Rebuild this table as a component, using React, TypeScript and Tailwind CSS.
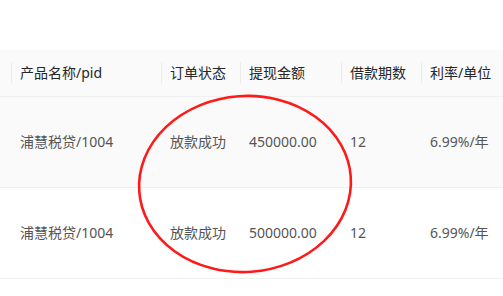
import React from "react";

const columns = [
  { key: "name", title: "产品名称/pid", width: "w-[150px]" },
  { key: "status", title: "订单状态", width: "w-[79px]" },
  { key: "amount", title: "提现金额", width: "w-[101px]" },
  { key: "term", title: "借款期数", width: "w-[80px]" },
  { key: "rate", title: "利率/单位", width: "w-[120px]" },
];

const rows = [
  { name: "浦慧税贷/1004", status: "放款成功", amount: "450000.00", term: "12", rate: "6.99%/年" },
  { name: "浦慧税贷/1004", status: "放款成功", amount: "500000.00", term: "12", rate: "6.99%/年" },
];

export default function App() {
  return (
    <div
      className="relative w-[503px] h-[296px] overflow-hidden bg-white pt-[50px]"
      style={{ fontFamily: '"Noto Sans", "Noto Sans CJK SC", sans-serif' }}
    >
      <table className="table-fixed border-collapse w-[542px] text-[14px]">
        <thead>
          <tr className="h-[46px] bg-[#fafafa] border-b border-[#f0f0f0]">
            {/* cropped column on the left */}
            <th className="relative w-[12px] p-0">
              <span className="absolute right-0 top-1/2 -translate-y-1/2 w-px h-[21px] bg-[#ececec]" />
            </th>
            {columns.map((c, i) => (
              <th
                key={c.key}
                className={`relative ${c.width} px-2 text-left font-normal text-[#262626]`}
              >
                {c.title}
                {i < columns.length - 1 && (
                  <span className="absolute right-0 top-1/2 -translate-y-1/2 w-px h-[21px] bg-[#ececec]" />
                )}
              </th>
            ))}
          </tr>
        </thead>
        <tbody>
          {rows.map((r, i) => (
            <tr
              key={i}
              className={`h-[91px] border-b border-[#f0f0f0] text-[#555] ${i === 0 ? "bg-[#fafafa]" : "bg-white"}`}
            >
              <td className="p-0" />
              <td className="px-2">{r.name}</td>
              <td className="px-2">{r.status}</td>
              <td className="px-2">{r.amount}</td>
              <td className="px-2">{r.term}</td>
              <td className="px-2">{r.rate}</td>
            </tr>
          ))}
        </tbody>
      </table>

      {/* red hand-drawn circle */}
      <svg className="absolute left-0 top-0 pointer-events-none" width="503" height="296">
        <ellipse
          cx="245"
          cy="184"
          rx="106"
          ry="88"
          transform="rotate(-4 245 184)"
          fill="none"
          stroke="#ff1a1a"
          strokeWidth="2.6"
        />
      </svg>
    </div>
  );
}
